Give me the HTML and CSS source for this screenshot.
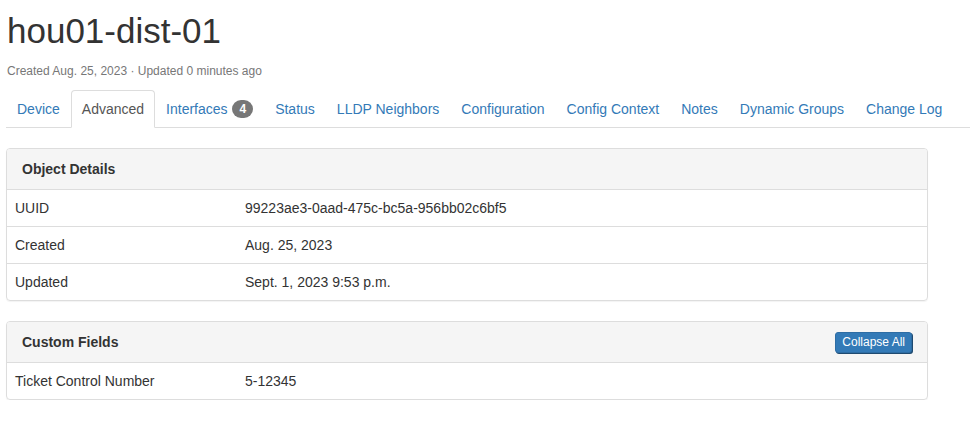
FILE: index.html
```html
<!DOCTYPE html>
<html>
<head>
<meta charset="utf-8">
<link rel="stylesheet" href="styles.css">
</head>
<body>
<div class="page">
  <h1 class="title">hou01-dist-01</h1>
  <p class="meta">Created Aug. 25, 2023 · Updated 0 minutes ago</p>
  <ul class="tabs">
    <li><a href="#">Device</a></li>
    <li class="active"><a href="#">Advanced</a></li>
    <li><a href="#">Interfaces <span class="badge">4</span></a></li>
    <li><a href="#">Status</a></li>
    <li><a href="#">LLDP Neighbors</a></li>
    <li><a href="#">Configuration</a></li>
    <li><a href="#">Config Context</a></li>
    <li><a href="#">Notes</a></li>
    <li><a href="#">Dynamic Groups</a></li>
    <li><a href="#">Change Log</a></li>
  </ul>
  <div class="panel">
    <div class="panel-heading"><strong>Object Details</strong></div>
    <table class="attrs">
      <tr><td class="label">UUID</td><td>99223ae3-0aad-475c-bc5a-956bb02c6bf5</td></tr>
      <tr><td class="label">Created</td><td>Aug. 25, 2023</td></tr>
      <tr><td class="label">Updated</td><td>Sept. 1, 2023 9:53 p.m.</td></tr>
    </table>
  </div>
  <div class="panel">
    <div class="panel-heading heading-row"><strong>Custom Fields</strong><button class="btn">Collapse All</button></div>
    <table class="attrs">
      <tr><td class="label">Ticket Control Number</td><td>5-12345</td></tr>
    </table>
  </div>
</div>
</body>
</html>
```
FILE: styles.css
```css
* { box-sizing: border-box; }
html, body { margin: 0; padding: 0; background: #fff; }
body {
  font-family: "Liberation Sans", Arial, Helvetica, sans-serif;
  font-size: 14px;
  line-height: 20px;
  color: #333;
}
.page { padding: 0 0 0 6px; }
.title {
  margin: 11px 0 0 1px;
  font-size: 35px;
  line-height: 40px;
  font-weight: normal;
  color: #333;
}
.meta {
  margin: 11px 0 0 1px;
  font-size: 12px;
  line-height: 18px;
  color: #777;
}
.tabs {
  list-style: none;
  margin: 10px 0 0;
  padding: 0;
  display: flex;
  border-bottom: 1px solid #ddd;
  white-space: nowrap;
}
.tabs li { margin-bottom: -1px; flex-shrink: 0; }
.tabs a {
  display: block;
  padding: 8px 10px;
  border: 1px solid transparent;
  border-radius: 4px 4px 0 0;
  color: #337ab7;
  text-decoration: none;
}
.tabs li.active a {
  color: #555;
  background: #fff;
  border-color: #ddd #ddd transparent;
}
.badge {
  display: inline-block;
  margin-left: 1px;
  min-width: 10px;
  padding: 3px 7px;
  font-size: 12px;
  font-weight: bold;
  line-height: 1;
  color: #fff;
  background: #777;
  border-radius: 10px;
  vertical-align: 1px;
}
.panel {
  width: 922px;
  margin-top: 20px;
  border: 1px solid #ddd;
  border-radius: 4px;
  box-shadow: 0 1px 1px rgba(0,0,0,.05);
  overflow: hidden;
}
.panel-heading {
  padding: 10px 15px;
  background: #f5f5f5;
  border-bottom: 1px solid #ddd;
  color: #333;
}
.heading-row {
  display: flex;
  justify-content: space-between;
  align-items: center;
}
.btn {
  font-family: inherit;
  font-size: 12px;
  line-height: 17px;
  padding: 1px 6px 1px;
  color: #fff;
  background: #337ab7;
  border: 1px solid #2e6da4;
  border-radius: 3px;
  box-shadow: 1px 1px 0 #1f4a70;
  margin: -1px 0 -2px;
}
.attrs { width: 100%; border-collapse: collapse; }
.attrs td {
  padding: 8px;
  border-top: 1px solid #ddd;
  vertical-align: top;
}
.attrs tr:first-child td { border-top: none; }
.attrs td.label { width: 25%; }
```
